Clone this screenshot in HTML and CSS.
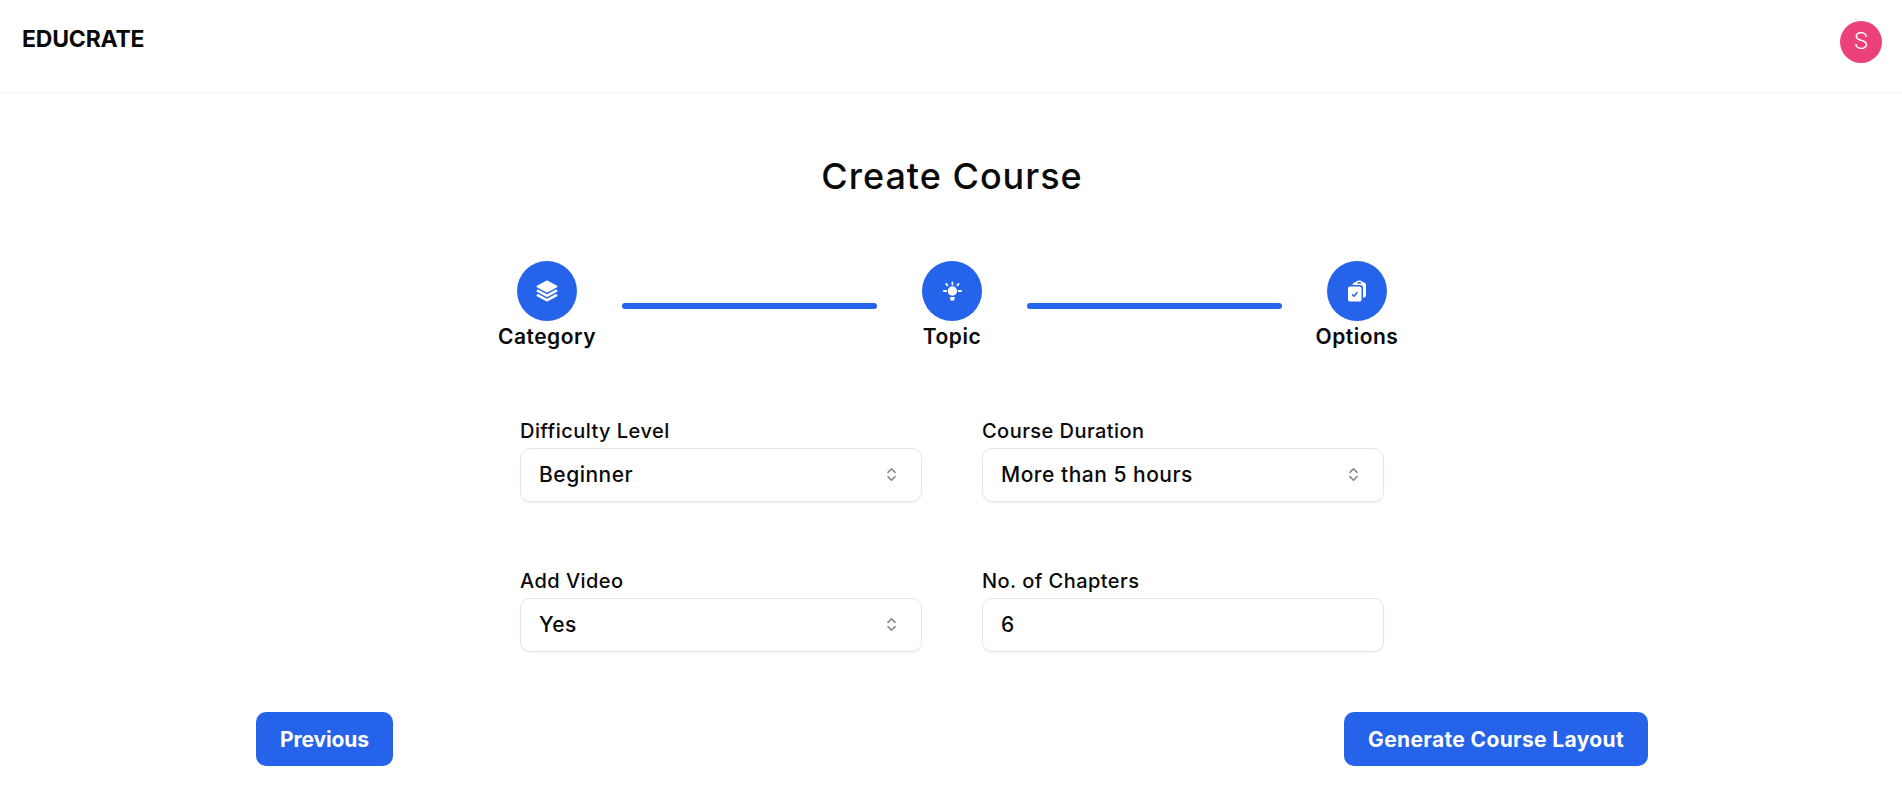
FILE: index.html
```html
<!DOCTYPE html>
<html lang="en">
<head>
    <meta charset="UTF-8">
    <meta name="viewport" content="width=device-width, initial-scale=1.0">
    <title>Create Course</title>
    <link rel="stylesheet" href="styles.css">
</head>
<body>
    <header class="header">
        <div class="logo">EDUCRATE</div>
        <div class="avatar">S</div>
    </header>

    <main class="page">
        <h1 class="page-title">Create Course</h1>

        <div class="stepper">
            <div class="step">
                <div class="step-icon">
                    <svg viewBox="0 0 24 24" width="24" height="24" fill="currentColor">
                        <path d="M11.644 1.59a.75.75 0 0 1 .712 0l9.75 5.25a.75.75 0 0 1 0 1.32l-9.75 5.25a.75.75 0 0 1-.712 0l-9.75-5.25a.75.75 0 0 1 0-1.32l9.75-5.25Z"/>
                        <path d="m3.265 10.602 7.668 4.129a2.25 2.25 0 0 0 2.134 0l7.668-4.13 1.37.739a.75.75 0 0 1 0 1.32l-9.75 5.25a.75.75 0 0 1-.71 0l-9.75-5.25a.75.75 0 0 1 0-1.32l1.37-.738Z"/>
                        <path d="m10.933 19.231-7.668-4.13-1.37.739a.75.75 0 0 0 0 1.32l9.75 5.25c.221.12.489.12.71 0l9.75-5.25a.75.75 0 0 0 0-1.32l-1.37-.738-7.668 4.13a2.25 2.25 0 0 1-2.134-.001Z"/>
                    </svg>
                </div>
                <div class="step-label">Category</div>
            </div>
            <div class="step-line"></div>
            <div class="step">
                <div class="step-icon">
                    <svg viewBox="0 0 24 24" width="24" height="24" fill="currentColor">
                        <circle cx="12.4" cy="12" r="4.7"/>
                        <path d="M10 18h4.8l-.6 3.6h-3.6Z"/>
                        <path d="M12.4 3.4v2M6.2 4.9l1.2 1.4M18.6 4.9l-1.2 1.4M3.9 12h2.2M18.8 12h2.2" fill="none" stroke="currentColor" stroke-width="1.8" stroke-linecap="round"/>
                    </svg>
                </div>
                <div class="step-label">Topic</div>
            </div>
            <div class="step-line"></div>
            <div class="step">
                <div class="step-icon">
                    <svg viewBox="0 0 24 24" width="24" height="24" fill="currentColor">
                        <path fill-rule="evenodd" d="M7.502 6h7.128A3.375 3.375 0 0 1 18 9.375v9.375a3 3 0 0 0 3-3V6.108c0-1.505-1.125-2.811-2.664-2.94a48.972 48.972 0 0 0-.673-.05A3 3 0 0 0 15 1.5h-1.5a3 3 0 0 0-2.663 1.618c-.225.015-.45.032-.673.05C8.662 3.295 7.554 4.542 7.502 6ZM13.5 3A1.5 1.5 0 0 0 12 4.5h4.5A1.5 1.5 0 0 0 15 3h-1.5Z"/>
                        <path fill-rule="evenodd" d="M3 9.375C3 8.339 3.84 7.5 4.875 7.5h9.75c1.036 0 1.875.84 1.875 1.875v11.25c0 1.035-.84 1.875-1.875 1.875h-9.75A1.875 1.875 0 0 1 3 20.625V9.375Zm9.586 4.594a.75.75 0 0 0-1.172-.938l-2.476 3.096-.908-.907a.75.75 0 0 0-1.06 1.06l1.5 1.5a.75.75 0 0 0 1.116-.062l3-3.75Z"/>
                    </svg>
                </div>
                <div class="step-label">Options</div>
            </div>
        </div>

        <div class="options-form">
            <div class="field">
                <label class="field-label">Difficulty Level</label>
                <button class="select-box" type="button">
                    <span>Beginner</span>
                    <svg class="chevrons" viewBox="0 0 24 24" width="17" height="17"><path d="m7 15 5 5 5-5M7 9l5-5 5 5"/></svg>
                </button>
            </div>
            <div class="field">
                <label class="field-label">Course Duration</label>
                <button class="select-box" type="button">
                    <span>More than 5 hours</span>
                    <svg class="chevrons" viewBox="0 0 24 24" width="17" height="17"><path d="m7 15 5 5 5-5M7 9l5-5 5 5"/></svg>
                </button>
            </div>
            <div class="field">
                <label class="field-label">Add Video</label>
                <button class="select-box" type="button">
                    <span>Yes</span>
                    <svg class="chevrons" viewBox="0 0 24 24" width="17" height="17"><path d="m7 15 5 5 5-5M7 9l5-5 5 5"/></svg>
                </button>
            </div>
            <div class="field">
                <label class="field-label">No. of Chapters</label>
                <input class="text-box" type="number" value="6">
            </div>
        </div>

        <div class="actions">
            <button class="btn" type="button">Previous</button>
            <button class="btn btn-wide" type="button">Generate Course Layout</button>
        </div>
    </main>
</body>
</html>
```

FILE: styles.css
```css
* {
    box-sizing: border-box;
}
body {
    margin: 0;
    font-family: Inter, "Liberation Sans", sans-serif;
    color: #0a0a0a;
    background: #fff;
}
.header {
    height: 94px;
    padding: 21px 20px 0 22px;
    display: flex;
    justify-content: space-between;
    align-items: flex-start;
    border-bottom: 1px solid #f3f4f6;
}
.logo {
    margin-top: -1px;
    font-size: 23px;
    line-height: 38px;
    font-weight: 700;
    letter-spacing: -0.2px;
}
.avatar {
    width: 42px;
    height: 42px;
    border-radius: 50%;
    background: #ec407a;
    color: #fff;
    font-family: Roboto, sans-serif;
    font-size: 23px;
    font-weight: 300;
    line-height: 42px;
    text-align: center;
}
.page {
    padding: 58px 254px 0 256px;
}
.page-title {
    margin: 0;
    height: 48px;
    font-size: 36px;
    line-height: 48px;
    font-weight: 500;
    text-align: center;
    letter-spacing: 1px;
}
.stepper {
    margin-top: 61px;
    display: flex;
    justify-content: center;
}
.step {
    width: 100px;
    display: flex;
    flex-direction: column;
    align-items: center;
}
.step-icon {
    width: 60px;
    height: 60px;
    border-radius: 50%;
    background: #2563eb;
    color: #fff;
    display: flex;
    align-items: center;
    justify-content: center;
}
.step-label {
    margin-top: 1px;
    font-size: 21px;
    line-height: 30px;
    font-weight: 600;
    letter-spacing: 0.5px;
    white-space: nowrap;
}
.step-line {
    width: 255px;
    height: 6px;
    margin: 42px 25px 0;
    border-radius: 3px;
    background: #2563eb;
}
.options-form {
    width: 864px;
    margin: 64px auto 0;
    display: grid;
    grid-template-columns: 402px 402px;
    column-gap: 60px;
    row-gap: 64px;
    justify-content: center;
}
.field-label {
    display: block;
    height: 30px;
    margin-bottom: 2px;
    font-size: 20px;
    line-height: 30px;
    font-weight: 500;
    letter-spacing: 0.45px;
}
.select-box, .text-box {
    width: 100%;
    height: 54px;
    padding: 0 21px 1px 18px;
    display: flex;
    align-items: center;
    justify-content: space-between;
    border: 1px solid #e5e7eb;
    border-radius: 10px;
    background: #fff;
    box-shadow: 0 1px 2px rgba(0,0,0,0.05);
    color: #0a0a0a;
    font-family: inherit;
    font-size: 21px;
    font-weight: 500;
    letter-spacing: 0.5px;
    appearance: textfield;
}
.chevrons {
    fill: none;
    stroke: #7f838b;
    stroke-width: 2;
    stroke-linecap: round;
    stroke-linejoin: round;
}
.actions {
    margin-top: 60px;
    display: flex;
    justify-content: space-between;
}
.btn {
    height: 54px;
    padding: 0 24px;
    border: 0;
    border-radius: 10px;
    background: #2563eb;
    color: #fff;
    font-family: inherit;
    font-size: 21px;
    font-weight: 700;
    letter-spacing: -0.1px;
}
.btn-wide {
    letter-spacing: 0.35px;
}
```
